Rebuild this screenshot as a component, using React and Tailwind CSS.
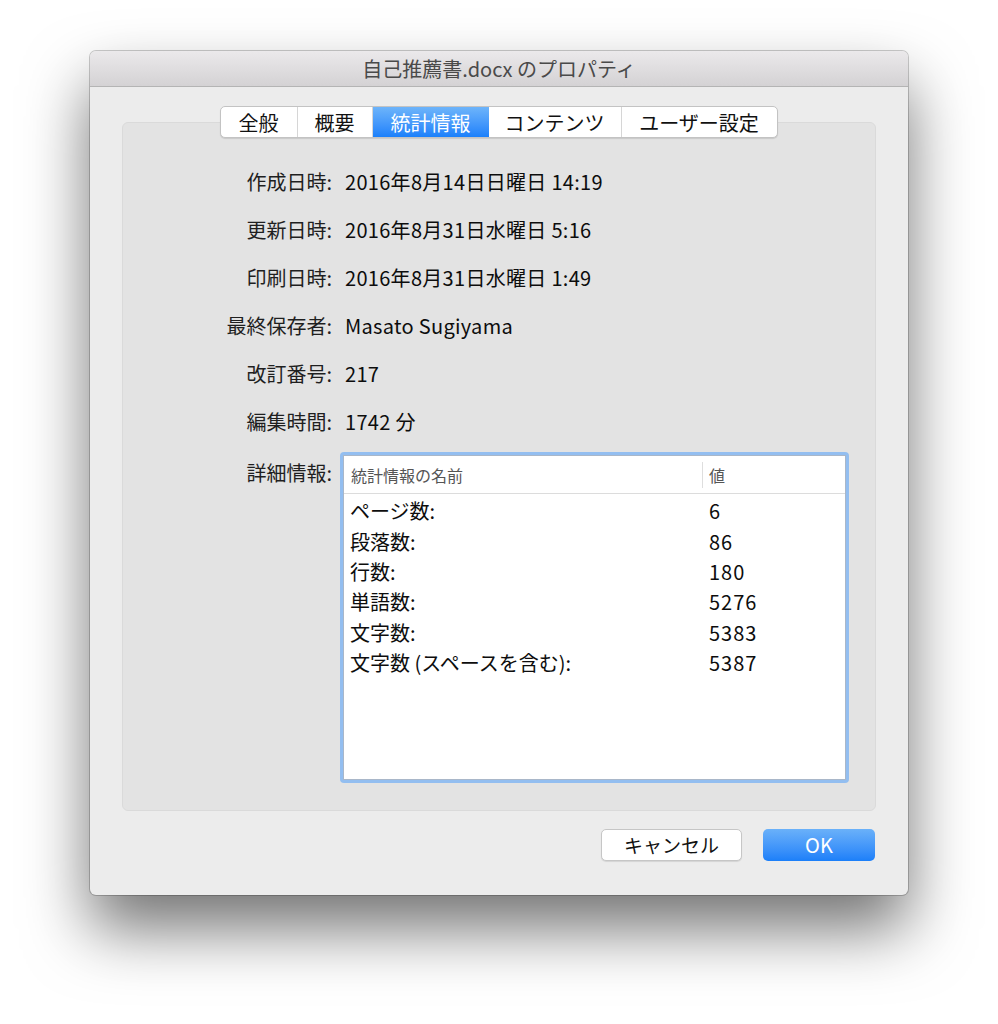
import * as React from "react";

const font = { fontFamily: '"Noto Sans CJK JP", "Noto Sans", sans-serif' };

const tabs = [
  { label: "全般", w: "w-[77px]" },
  { label: "概要", w: "w-[75px]" },
  { label: "統計情報", w: "w-[116px]", active: true },
  { label: "コンテンツ", w: "w-[133px]" },
  { label: "ユーザー設定", w: "w-[155px]" },
];

const info = [
  ["作成日時:", "2016年8月14日日曜日 14:19"],
  ["更新日時:", "2016年8月31日水曜日 5:16"],
  ["印刷日時:", "2016年8月31日水曜日 1:49"],
  ["最終保存者:", "Masato Sugiyama"],
  ["改訂番号:", "217"],
  ["編集時間:", "1742 分"],
];

const stats = [
  ["ページ数:", "6"],
  ["段落数:", "86"],
  ["行数:", "180"],
  ["単語数:", "5276"],
  ["文字数:", "5383"],
  ["文字数 (スペースを含む):", "5387"],
];

const App = () => {
  return (
    <div className="w-[998px] h-[1024px] bg-white pt-[51px] pl-[90px]" style={font}>
      <div className="w-[818px] h-[844px] rounded-[6px] bg-[#ececec] flex flex-col shadow-[0_34px_64px_rgba(0,0,0,0.55),0_0_0_1px_rgba(0,0,0,0.2)] overflow-hidden">
        <div className="h-[36px] shrink-0 flex items-center justify-center pt-[1px] bg-gradient-to-b from-[#ebe9eb] to-[#d4d2d4] border-b border-[#b4b4b4] text-[20px] text-[#4a4a4a]">
          自己推薦書.docx のプロパティ
        </div>

        <div className="px-[32px] pt-[19px] flex flex-col">
          <div className="relative z-10 flex justify-center">
            <div className="flex h-[32px] ml-[-1px] rounded-[5px] bg-white border border-[#c3c3c3] shadow-[0_1px_1px_rgba(0,0,0,0.12)] overflow-hidden">
              {tabs.map((t, i) => (
                <div
                  key={t.label}
                  className={
                    t.active
                      ? `${t.w} flex items-center justify-center pt-[1px] text-[20px] text-white bg-gradient-to-b from-[#6db4fa] to-[#1a80fb]`
                      : `${t.w} flex items-center justify-center pt-[1px] text-[20px] text-[#111] ${i < tabs.length - 1 ? "border-r border-[#d6d6d6]" : ""}`
                  }
                >
                  {t.label}
                </div>
              ))}
            </div>
          </div>

          <div className="mt-[-16px] h-[689px] rounded-[6px] bg-[#e3e3e3] border border-[#dadada] pt-[35px]">
            {info.map(([k, v]) => (
              <div key={k} className="flex h-[48px] items-center">
                <div className="w-[209px] text-right text-[20px] text-[#1f1f1f]">{k}</div>
                <div className="ml-[13px] text-[20px] tracking-[0.3px] text-[#0d0d0d]">{v}</div>
              </div>
            ))}

            <div className="flex mt-[6px]">
              <div className="w-[209px] text-right text-[20px] text-[#1f1f1f] pt-[6px]">詳細情報:</div>
              <div className="ml-[8px] w-[509px] h-[331px] rounded-[4px] bg-[#93bef0] p-[3px]">
                <div className="w-full h-full bg-white border border-[#a9b7c9] flex flex-col">
                  <div className="h-[38px] flex items-center border-b border-[#dcdcdc] text-[16px] text-[#555]">
                    <div className="w-[358px] pl-[7px]">統計情報の名前</div>
                    <div className="h-[26px] border-l border-[#dedede] pl-[6px] flex items-center">値</div>
                  </div>
                  <div className="pt-[2px]">
                    {stats.map(([k, v]) => (
                      <div key={k} className="flex h-[30.4px] items-center text-[20px] text-[#0d0d0d]">
                        <div className="w-[365px] pl-[6px]">{k}</div>
                        <div className="tracking-[1px]">{v}</div>
                      </div>
                    ))}
                  </div>
                </div>
              </div>
            </div>
          </div>

          <div className="flex justify-end gap-[21px] mt-[18px] mr-[1px]">
            <button className="w-[141px] h-[32px] rounded-[5px] bg-white border border-[#c6c6c6] shadow-[0_1px_1px_rgba(0,0,0,0.1)] text-[19px] text-[#111] flex items-center justify-center">
              キャンセル
            </button>
            <button className="w-[112px] h-[32px] rounded-[5px] bg-gradient-to-b from-[#6ab1f9] to-[#1b7ff9] text-[20px] text-white flex items-center justify-center">
              OK
            </button>
          </div>
        </div>
      </div>
    </div>
  );
};

export default App;
